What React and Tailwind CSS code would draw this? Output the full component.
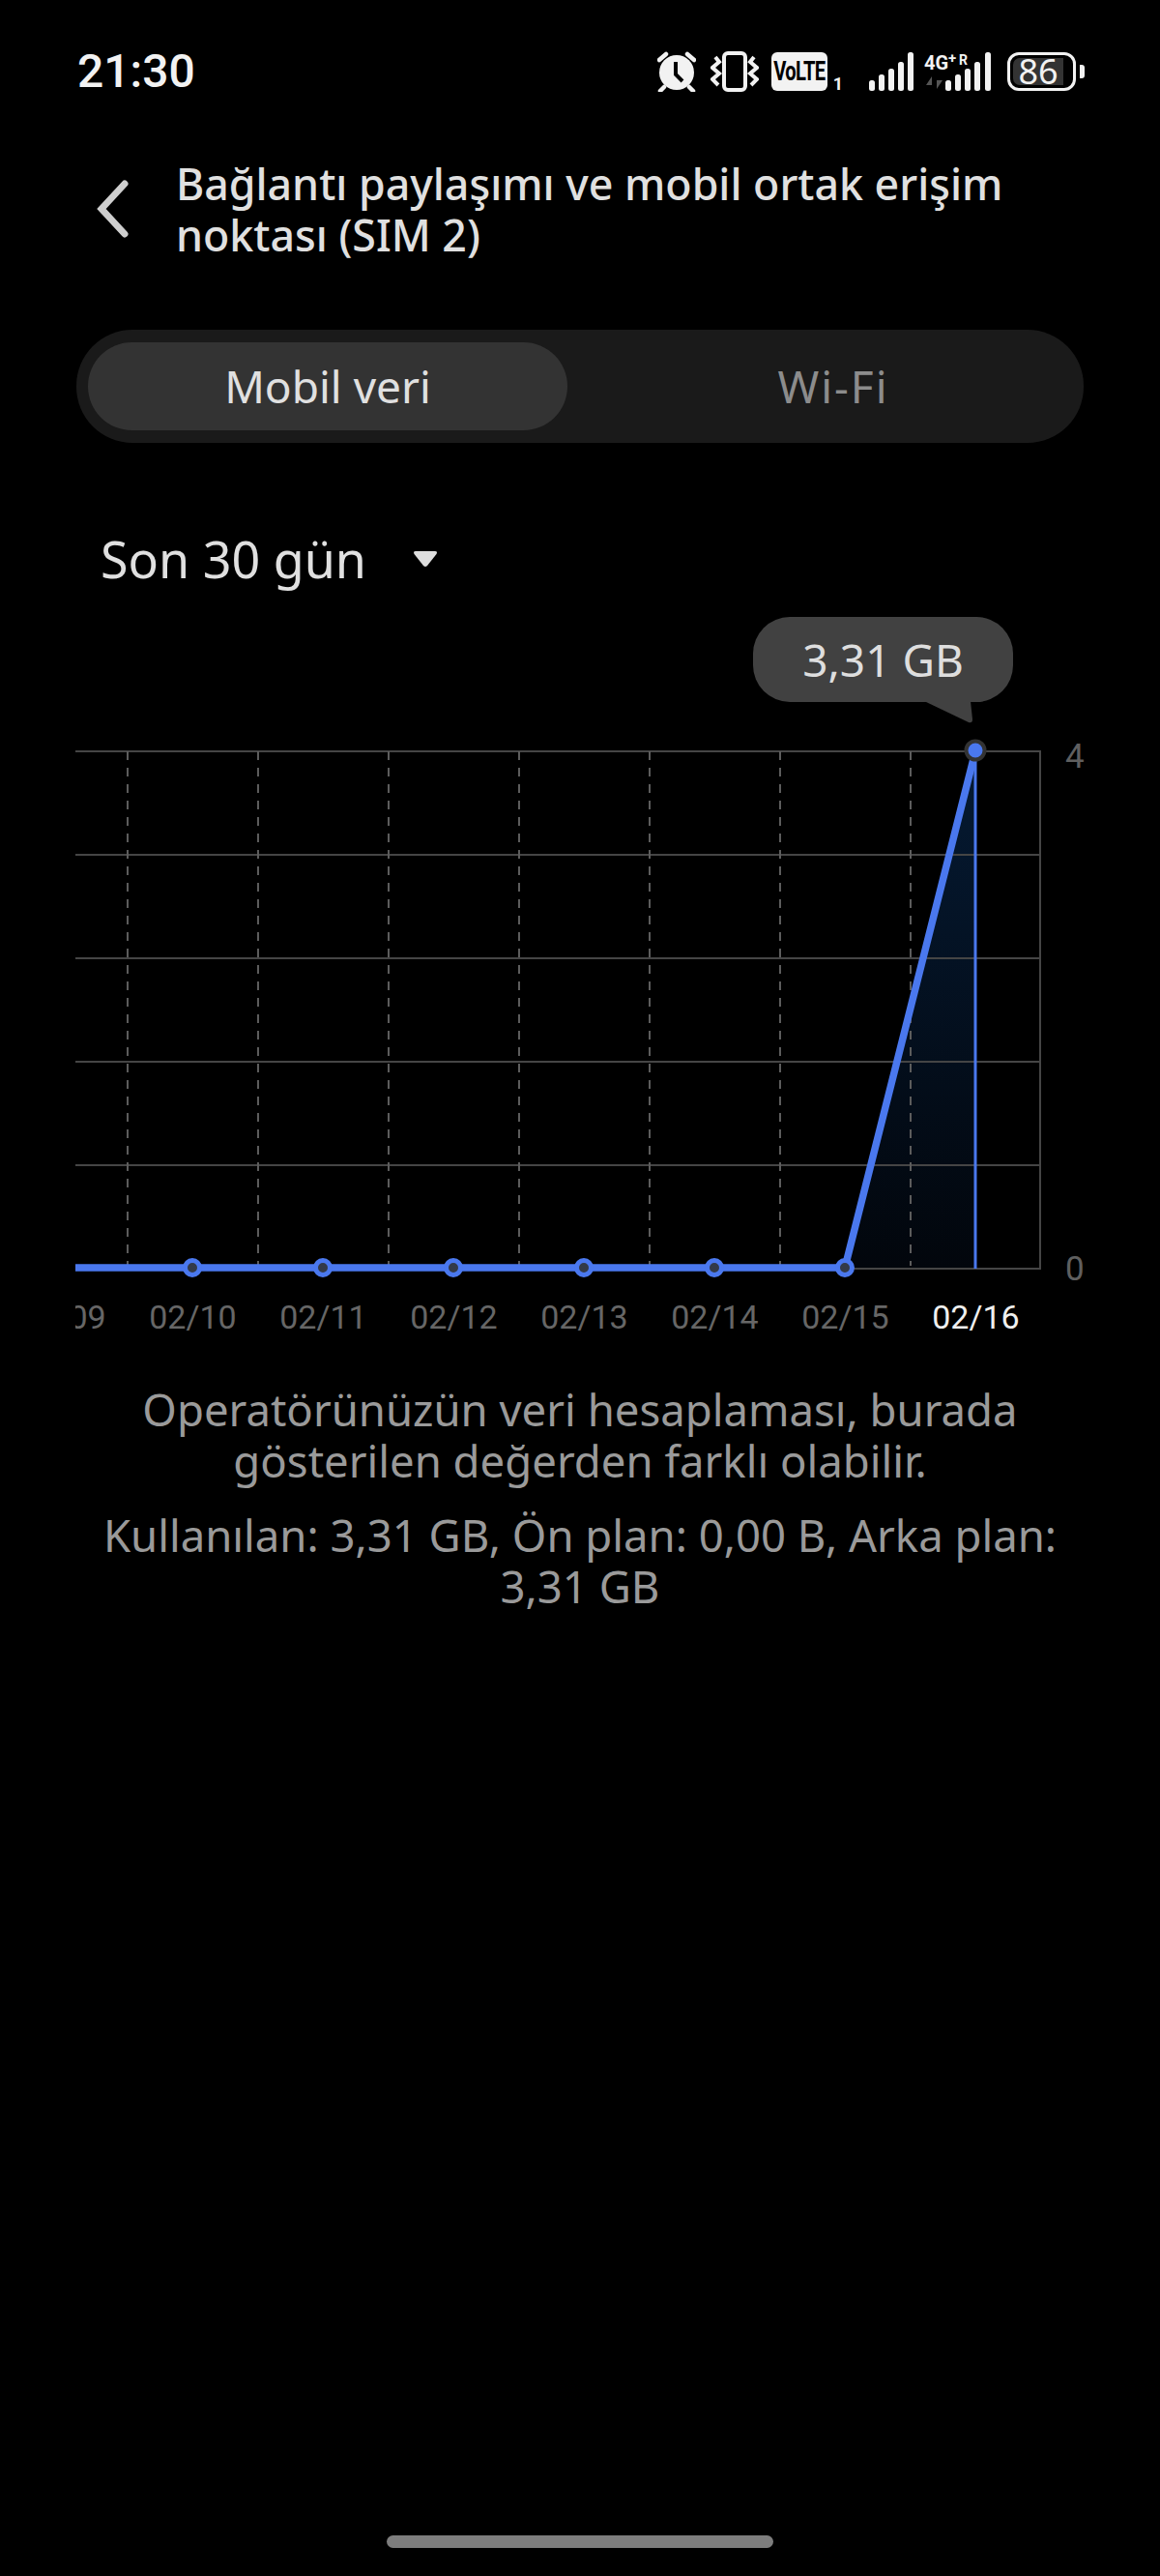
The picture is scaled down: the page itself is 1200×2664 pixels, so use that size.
const days = ['02/09', '02/10', '02/11', '02/12', '02/13', '02/14', '02/15', '02/16']
const gridY = [776, 883, 990, 1097, 1204, 1311]
const dashX = [132, 267, 402, 537, 672, 807, 942]
const dotX = [199, 334, 469, 604, 739, 874]

function StatusIcons() {
  return (
    <div className="flex items-center">
      <svg width="40" height="42" viewBox="0 0 40 42" className="mr-[15px]">
        <circle cx="20" cy="22" r="18" fill="#f2f2f2" />
        <path d="M19 11v13l7 7" fill="none" stroke="#000" strokeWidth="4" />
        <path d="M2 9 9 3M38 9l-7-6M7 37l-4 4M33 37l4 4" stroke="#f2f2f2" strokeWidth="4.500" strokeLinecap="round" />
      </svg>
      <svg width="50" height="42" viewBox="0 0 50 42" className="mr-[13px]">
        <rect x="14" y="2" width="22" height="38" rx="4" fill="none" stroke="#f2f2f2" strokeWidth="4" />
        <path d="M5 6 9 11 2 17l7 6-7 6 6 6M45 6l-4 5 7 6-7 6 7 6-6 6" fill="none" stroke="#f2f2f2" strokeWidth="4" />
      </svg>
      <div className="flex items-end mr-[27px]">
        <div className="w-[58px] h-[40px] rounded-[6px] bg-[#f2f2f2] flex items-center justify-center text-black font-bold text-[28px] leading-none tracking-[-1px] font-['Roboto',sans-serif]">
          <span className="inline-block scale-x-[0.72]">VoLTE</span>
        </div>
        <span className="ml-[6px] text-[#f2f2f2] text-[18px] leading-[14px] font-bold font-['Roboto',sans-serif]">1</span>
      </div>
      <svg width="46" height="40" viewBox="0 0 46 40" className="mr-[11px]">
        <rect x="0" y="29" width="6" height="11" rx="2.500" fill="#f2f2f2" />
        <rect x="10" y="23" width="6" height="17" rx="2.500" fill="#f2f2f2" />
        <rect x="20" y="17" width="6" height="23" rx="2.500" fill="#f2f2f2" />
        <rect x="30" y="10" width="6" height="30" rx="2.500" fill="#f2f2f2" />
        <rect x="40" y="0" width="6" height="40" rx="2.500" fill="#f2f2f2" />
      </svg>
      <div className="relative w-[69px] h-[40px] mr-[17px]">
        <span className="absolute left-0 top-[1px] text-[#f2f2f2] text-[20px] leading-[20px] font-bold font-['Roboto',sans-serif]">4G</span>
        <span className="absolute left-[25px] top-[-2px] text-[#f2f2f2] text-[15px] leading-[16px] font-bold font-['Roboto',sans-serif]">+</span>
        <span className="absolute left-[36px] top-[0px] text-[#f2f2f2] text-[14px] leading-[16px] font-bold font-['Roboto',sans-serif]">R</span>
        <svg width="69" height="40" viewBox="0 0 69 40" className="absolute left-0 top-0">
          <path d="M8 38V25l-6 9h6zM13 25v13l6-9h-6z" fill="#555" />
          <rect x="22" y="29" width="6" height="11" rx="2.500" fill="#f2f2f2" />
          <rect x="32" y="23" width="6" height="17" rx="2.500" fill="#f2f2f2" />
          <rect x="42" y="17" width="6" height="23" rx="2.500" fill="#f2f2f2" />
          <rect x="52" y="10" width="6" height="30" rx="2.500" fill="#f2f2f2" />
          <rect x="63" y="0" width="6" height="40" rx="2.500" fill="#f2f2f2" />
        </svg>
      </div>
      <div className="w-[71px] h-[40px] rounded-[12px] border-[3px] border-[#f2f2f2] p-[3px]">
        <div className="w-[52px] h-full rounded-l-[7px] bg-[#333] flex items-center justify-center text-[#f2f2f2] text-[36px] leading-none font-['Noto_Sans',sans-serif] whitespace-nowrap">
          86
        </div>
      </div>
      <div className="ml-[4px] w-[5px] h-[14px] rounded-r-[3px] bg-[#f2f2f2]" />
    </div>
  )
}

function Chart() {
  return (
    <div className="relative mt-[25px] pl-[78px] pr-[78px]">
      {/* tooltip sits over the top of the plot */}
      <div className="absolute left-[779px] top-0 w-[269px] h-[88px] rounded-[38px] bg-[#414141] flex items-center justify-center text-[#dedede] text-[46px] font-['Noto_Sans',sans-serif]">
        3,31 GB
      </div>
      <svg width="60" height="24" viewBox="0 0 60 24" className="absolute left-[956px] top-[87px]">
        <path d="M0 0h48l2 19q0 4-4 3z" fill="#414141" />
      </svg>

      <div className="pt-[127px] flex">
        <svg width="1000" height="550" viewBox="78 764 1000 550" className="block shrink-0 overflow-visible">
          <defs>
            <linearGradient id="fill" x1="0" y1="0" x2="0" y2="1">
              <stop offset="0" stopColor="#051a33" />
              <stop offset="1" stopColor="#02060c" />
            </linearGradient>
          </defs>
          <path d="M874 1310 1009 776V1310z" fill="url(#fill)" />
          {gridY.map(y => (
            <line key={y} x1="78" x2="1077" y1={y} y2={y} stroke="#454545" strokeWidth="2" />
          ))}
          <line x1="1076" x2="1076" y1="776" y2="1311" stroke="#454545" strokeWidth="2" />
          {dashX.map(x => (
            <line key={x} x1={x} x2={x} y1="776" y2="1308" stroke="#5c5c5c" strokeWidth="2" strokeDasharray="9 8" />
          ))}
          <line x1="1009" x2="1009" y1="776" y2="1311" stroke="#4a78ee" strokeWidth="3" />
          <path d="M78 1310H874L1009 776" fill="none" stroke="#4a78ee" strokeWidth="7.500" />
          {dotX.map(x => (
            <circle key={x} cx={x} cy="1310" r="7.500" fill="#333a48" stroke="#4a78ee" strokeWidth="5" />
          ))}
          <circle cx="1009" cy="775" r="9.500" fill="#4a78ee" stroke="#333" strokeWidth="4" />
        </svg>
        <div className="flex-1 flex flex-col justify-between pl-[24px] h-[566px] -mb-[16px] text-[#5f5f5f] text-[35px] leading-[36px] font-['Roboto',sans-serif]">
          <span>4</span>
          <span>0</span>
        </div>
      </div>

      <div className="mt-[24px] w-[998px] overflow-hidden flex text-[34px] leading-[46px] font-['Roboto',sans-serif]">
        {days.map((d, i) => (
          <div key={d} className={`w-[135px] shrink-0 text-center ${i === 0 ? 'ml-[-81px]' : ''} ${i === 7 ? 'text-[#efefef]' : 'text-[#666]'}`}>
            {d}
          </div>
        ))}
      </div>
    </div>
  )
}

export default function App() {
  return (
    <div className="min-h-[2664px] bg-black flex flex-col font-['Noto_Sans',sans-serif]">
      <div className="h-[147px] pl-[80px] pr-[78px] pt-[53px] flex justify-between items-start">
        <div className="text-[#f2f2f2] text-[48px] leading-[42px] font-medium font-['Roboto',sans-serif]">21:30</div>
        <StatusIcons />
      </div>

      <div className="flex items-center pl-[100px] pr-[60px] h-[90px] mt-[24px]">
        <svg width="34" height="60" viewBox="0 0 34 60" className="shrink-0">
          <path d="M29 4 5 30l24 26" fill="none" stroke="#cfcfcf" strokeWidth="7" strokeLinecap="round" />
        </svg>
        <h1 className="ml-[48px] text-[#e0e0e0] text-[44.700px] leading-[53px] font-medium">
          Bağlantı paylaşımı ve mobil ortak erişim noktası (SIM 2)
        </h1>
      </div>

      <div className="mx-[79px] mt-[80px] h-[117px] rounded-[58px] bg-[#1a1a1a] flex items-center pl-[12px] text-[46px]">
        <div className="w-[496px] h-[91px] rounded-[46px] bg-[#333] flex items-center justify-center text-[#e0e0e0]">
          Mobil veri
        </div>
        <div className="flex-1 text-center text-[#8c8c8c] pl-[16px] tracking-[2px]">Wi-Fi</div>
      </div>

      <div className="mt-[85px] pl-[104px] flex items-center text-[#e0e0e0] text-[52px] leading-[70px]">
        Son 30 gün
        <svg width="28" height="20" viewBox="0 0 28 20" className="ml-[47px]">
          <path d="M4 2h20q3 0 1.500 3L16 17q-2 2-4 0L2.500 5Q1 2 4 2z" fill="#dedede" />
        </svg>
      </div>

      <Chart />

      <div className="mt-[46px] mx-[100px] text-center text-[#9a9a9a] text-[45.500px] leading-[53px]">
        <p className="px-[20px]">Operatörünüzün veri hesaplaması, burada gösterilen değerden farklı olabilir.</p>
        <p className="mt-[24px]">Kullanılan: 3,31 GB, Ön plan: 0,00 B, Arka plan: 3,31 GB</p>
      </div>

      <div className="flex-1" />
      <div className="pb-[29px] flex justify-center">
        <div className="w-[400px] h-[13px] rounded-full bg-[#7d7d7d]" />
      </div>
    </div>
  )
}
